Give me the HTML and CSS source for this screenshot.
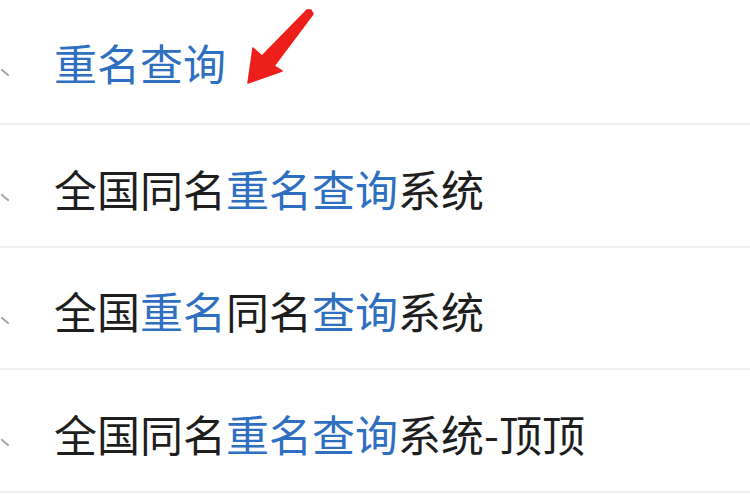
FILE: index.html
```html
<!DOCTYPE html>
<html lang="zh-CN">
<head>
<meta charset="utf-8">
<title>重名查询</title>
<link rel="stylesheet" href="styles.css">
</head>
<body>
<ul class="suggest">
  <li class="row first">
    <span class="mark"><svg width="12" height="40" viewBox="0 0 12 40"><path d="M2 27 L8 32" stroke="#a8a8a8" stroke-width="2.2" stroke-linecap="round"/></svg></span>
    <span class="text"><em>重名查询</em></span>
  </li>
  <li class="row">
    <span class="mark"><svg width="12" height="40" viewBox="0 0 12 40"><path d="M2 27 L8 32" stroke="#a8a8a8" stroke-width="2.2" stroke-linecap="round"/></svg></span>
    <span class="text">全国同名<em>重名查询</em>系统</span>
  </li>
  <li class="row">
    <span class="mark"><svg width="12" height="40" viewBox="0 0 12 40"><path d="M2 27 L8 32" stroke="#a8a8a8" stroke-width="2.2" stroke-linecap="round"/></svg></span>
    <span class="text">全国<em>重名</em>同名<em>查询</em>系统</span>
  </li>
  <li class="row">
    <span class="mark"><svg width="12" height="40" viewBox="0 0 12 40"><path d="M2 27 L8 32" stroke="#a8a8a8" stroke-width="2.2" stroke-linecap="round"/></svg></span>
    <span class="text">全国同名<em>重名查询</em>系统-顶顶</span>
  </li>
</ul>
<svg class="arrow" width="750" height="120" viewBox="0 0 750 120">
  <polygon points="248,83 253,48 262,56 307,10 311,10 313,14 274,66 282,71" fill="#ec1f1b" stroke="#ec1f1b" stroke-width="1.5" stroke-linejoin="round"/>
</svg>
</body>
</html>
```

FILE: styles.css
```css
html, body {
  margin: 0;
  padding: 0;
  background: #ffffff;
}
body {
  width: 750px;
  height: 500px;
  overflow: hidden;
  position: relative;
  font-family: "Noto Sans CJK SC", "Noto Sans", sans-serif;
}
.suggest {
  list-style: none;
  margin: 0;
  padding: 0;
}
.row {
  height: 122.5px;
  box-sizing: border-box;
  border-bottom: 2px solid #efefef;
  display: flex;
  align-items: center;
  padding-top: 6px;
  gap: 42px;
}
.row.first {
  height: 125px;
  padding-top: 2px;
}
.mark {
  display: flex;
  width: 12px;
  height: 40px;
}
.text {
  font-size: 43px;
  line-height: 1;
  color: #1e1e1e;
}
.text em {
  font-style: normal;
  color: #2f6fc2;
}
.arrow {
  position: absolute;
  left: 0;
  top: 0;
}
```
